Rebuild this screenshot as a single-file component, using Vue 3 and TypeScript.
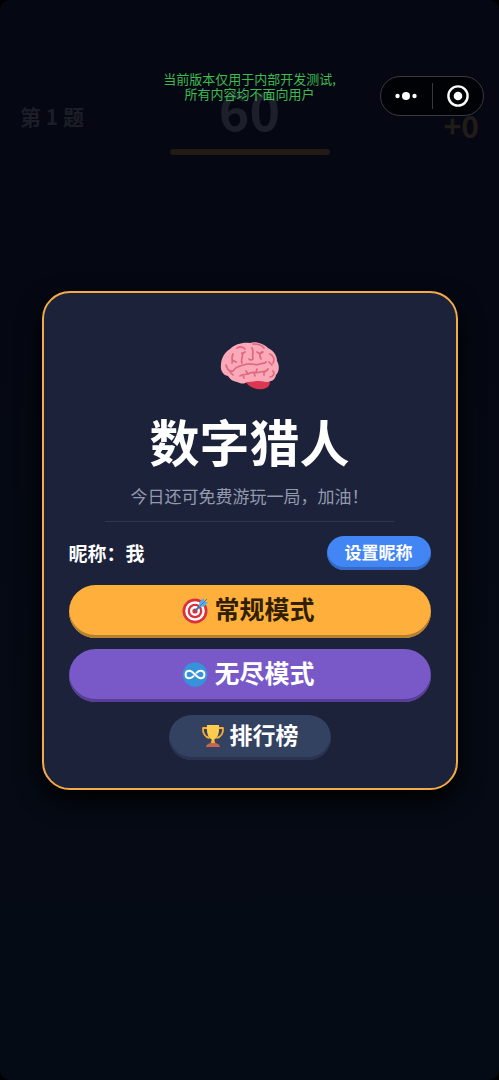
<script setup lang="ts">
import { ref } from 'vue'

const nickname = ref('我')
const question = ref(1)
const seconds = ref(60)
const score = ref(0)
</script>

<template>
  <div class="page">
    <header class="hud">
      <span class="question">第 {{ question }} 题</span>
      <div class="timer">
        <span class="seconds">{{ seconds }}</span>
        <div class="bar"></div>
      </div>
      <span class="score">+{{ score }}</span>
    </header>
    <div class="board"></div>

    <p class="notice">当前版本仅用于内部开发测试,<br />所有内容均不面向用户</p>

    <div class="capsule">
      <button type="button" class="capsule-btn" aria-label="更多">
        <svg width="24" height="24" viewBox="0 0 24 24" fill="#fff">
          <circle cx="3.5" cy="12" r="2.2" />
          <circle cx="12" cy="12" r="4" />
          <circle cx="20.5" cy="12" r="2.2" />
        </svg>
      </button>
      <span class="capsule-line"></span>
      <button type="button" class="capsule-btn" aria-label="关闭">
        <svg width="24" height="24" viewBox="0 0 24 24">
          <circle cx="12" cy="12" r="9.6" fill="none" stroke="#fff" stroke-width="2.4" />
          <circle cx="12" cy="12" r="4.3" fill="#fff" />
        </svg>
      </button>
    </div>

    <main class="overlay">
      <section class="card">
        <svg class="brain" width="60" height="50" viewBox="0 0 60 50" aria-hidden="true">
          <path d="M25 40C29 47 37 49 43 48C49 47 51 43 49 38L38 36Z" fill="#dc3650" />
          <path d="M17 41C12 40 10 38 8 35C3 34 0 29 1 24C1 17 5 11 10 8C15 3 23 1 30 2C36 0 44 3 48 7C54 10 57 15 57 20C60 25 59 31 56 34C55 39 51 41 46 41C38 39 31 41 27 41C23 44 20 42 17 41Z" fill="#fba9b9" />
          <g fill="none" stroke="#dc6980" stroke-width="1.7" stroke-linecap="round" stroke-linejoin="round">
            <path d="M6 24C7 28 9 31 13 30C17 24 22 25 27 23C32 22 36 25 40 23C42 22 45 23 46 21" />
            <path d="M13 13C11 17 13 19 12 22M12 19L16 21M22 12C24 16 20 18 22 22M22 13L25 11M32 7C34 11 32 14 33 18C31 20 30 19 29 18M42 11C38 13 40 15 41 18M37 11L40 13L43 11" />
            <path d="M17 7C20 5 23 6 25 8M33 3C38 3 42 4 44 7M50 13C54 15 55 19 53 22M49 21L52 24M53 30C55 33 53 36 50 36" />
            <path d="M20 35C23 32 26 35 30 32C34 30 36 33 40 31C43 30 46 32 48 28M28 33L26 30M36 31L37 28M44 31L44 34M10 31L13 34M23 34L24 37M34 32L35 35" />
          </g>
        </svg>
        <h1>数字猎人</h1>
        <p class="subtitle">今日还可免费游玩一局，加油！</p>
        <hr />
        <div class="profile">
          <span class="nickname">昵称：{{ nickname }}</span>
          <button type="button" class="edit">设置昵称</button>
        </div>
        <button type="button" class="mode normal">
          <svg width="27" height="27" viewBox="0 0 27 27" aria-hidden="true">
            <circle cx="13" cy="14" r="12.5" fill="#dc2f3c" />
            <circle cx="13" cy="14" r="9.8" fill="#fff" />
            <circle cx="13" cy="14" r="7.3" fill="#dc2f3c" />
            <circle cx="13" cy="14" r="5" fill="#fff" />
            <circle cx="13" cy="14" r="2.6" fill="#dc2f3c" />
            <path d="M13 14L21 6" stroke="#3278a8" stroke-width="1.8" />
            <path d="M17 9L17.5 5L21.5 1L22.5 4.5L26 5.5L22 9.5L18 10Z" fill="#55aee8" />
            <path d="M18 9L25 2" stroke="#287eb8" stroke-width="1" />
          </svg>
          <span>常规模式</span>
        </button>
        <button type="button" class="mode endless">
          <svg width="27" height="27" viewBox="0 0 27 27" aria-hidden="true">
            <circle cx="13" cy="13.5" r="12.3" fill="#3592db" />
            <path d="M11.5 15.2C10.3 16.6 9 17.3 7.4 17.3C5 17.3 3.6 15.6 3.6 13.5S5 9.700 7.400 9.700C11.300 9.700 14.700 17.300 18.600 17.300C21 17.300 22.400 15.600 22.400 13.500S21 9.700 18.600 9.700C17 9.700 15.700 10.400 14.500 11.800" fill="none" stroke="#fff" stroke-width="2" stroke-linecap="round" />
          </svg>
          <span>无尽模式</span>
        </button>
        <button type="button" class="rank">
          <svg width="24" height="24" viewBox="0 0 24 24" aria-hidden="true">
            <path d="M7 4H2C1.500 9 4 13 8.500 14M17 4H22C22.500 9 20 13 15.500 14" fill="none" stroke="#ffac33" stroke-width="1.800" stroke-linejoin="round" />
            <path d="M6 1H18C18.500 8 17.500 13 13.300 15.500V19H10.700V15.500C6.500 13 5.500 8 6 1Z" fill="#ffcc4d" />
            <path d="M10.500 16.500H13.500L14.500 20H9.500Z" fill="#ffac33" />
            <path d="M5 23C5 20.500 8 19.500 9.500 19H14.500C16 19.500 19 20.500 19 23Z" fill="#c1694f" />
          </svg>
          <span>排行榜</span>
        </button>
      </section>
    </main>
  </div>
</template>

<style>
body {
  margin: 0;
  background: #000;
}
</style>

<style scoped>
.page {
  position: relative;
  box-sizing: border-box;
  min-height: 100vh;
  overflow: hidden;
  border-radius: 10px;
  background: linear-gradient(#050712, #050b15);
  color: #fff;
  font-family: "Noto Sans CJK SC", "Noto Sans", sans-serif;
}

button {
  margin: 0;
  border: 0;
  font-family: inherit;
  cursor: pointer;
}

.hud {
  display: grid;
  grid-template-columns: 1fr 160px 1fr;
  align-items: center;
  padding: 76px 20px 0;
  font-weight: 700;
}

.question {
  font-size: 21px;
  line-height: 24px;
  color: #1c1e27;
}

.timer {
  display: flex;
  flex-direction: column;
  align-items: center;
}

.seconds {
  font-size: 52px;
  line-height: 66px;
  color: #1d202a;
}

.bar {
  width: 100%;
  height: 6px;
  margin-top: 7px;
  border-radius: 3px;
  background: #231a16;
}

.score {
  padding-top: 18px;
  font-size: 30px;
  line-height: 32px;
  text-align: right;
  color: #211c18;
}

.board {
  height: 124px;
  margin: 230px 22px 0;
  border: 1px solid #080b13;
  border-radius: 24px;
}

.notice {
  position: absolute;
  top: 71px;
  left: 0;
  right: 0;
  margin: 0;
  font-size: 13px;
  line-height: 15px;
  text-align: center;
  color: #3cbc50;
}

.capsule {
  position: absolute;
  top: 76px;
  right: 15px;
  display: flex;
  align-items: center;
  box-sizing: border-box;
  width: 104px;
  height: 40px;
  border: 1px solid #383a40;
  border-radius: 20px;
  background: #010206;
}

.capsule-btn {
  display: flex;
  flex: 1;
  justify-content: center;
  padding: 0;
  background: none;
}

.capsule-line {
  width: 1px;
  height: 26px;
  background: #383a40;
}

.overlay {
  position: absolute;
  inset: 0;
  display: flex;
  align-items: center;
  justify-content: center;
}

.card {
  display: flex;
  flex-direction: column;
  align-items: center;
  box-sizing: border-box;
  width: calc(100% - 83px);
  padding: 48px 25px 28px;
  border: 2px solid #f4ab47;
  border-radius: 28px;
  background: #1b2239;
  box-shadow: 0 10px 24px #000;
}

.brain {
  display: block;
}

h1 {
  margin: 17px 0 0;
  font-size: 50px;
  line-height: 64px;
  font-weight: 700;
}

.subtitle {
  margin: 11px 0 0;
  font-size: 17px;
  line-height: 26px;
  color: #939ab0;
}

hr {
  width: 80%;
  height: 1px;
  margin: 12px 0 14px;
  border: 0;
  background: #30374d;
}

.profile {
  display: flex;
  align-items: center;
  justify-content: space-between;
  width: 100%;
}

.nickname {
  font-size: 19px;
  line-height: 28px;
  font-weight: 700;
}

.edit {
  height: 34px;
  padding: 0 18px 2px;
  border-radius: 17px;
  background: #4285f4;
  box-shadow: inset 0 -3px #346ac3;
  color: #fff;
  font-size: 17px;
  line-height: 24px;
  font-weight: 700;
}

.mode,
.rank {
  display: flex;
  align-items: center;
  justify-content: center;
  gap: 5px;
  font-weight: 700;
  color: #fff;
}

.mode span,
.rank span {
  padding-bottom: 4px;
}

.mode {
  width: 100%;
  height: 53px;
  padding: 0 2px 2px 0;
  border-radius: 27px;
  font-size: 25px;
  line-height: 36px;
}

.normal {
  margin-top: 15px;
  background: #ffaf3b;
  box-shadow: inset 0 -3px #b58130;
  color: #302000;
}

.endless {
  margin-top: 11px;
  background: #7958c8;
  box-shadow: inset 0 -3px #583f95;
}

.rank {
  height: 45px;
  margin-top: 13px;
  padding: 0 32px 2px;
  border-radius: 23px;
  background: #344262;
  box-shadow: inset 0 -3px #2a3450;
  font-size: 23px;
  line-height: 32px;
}
</style>
